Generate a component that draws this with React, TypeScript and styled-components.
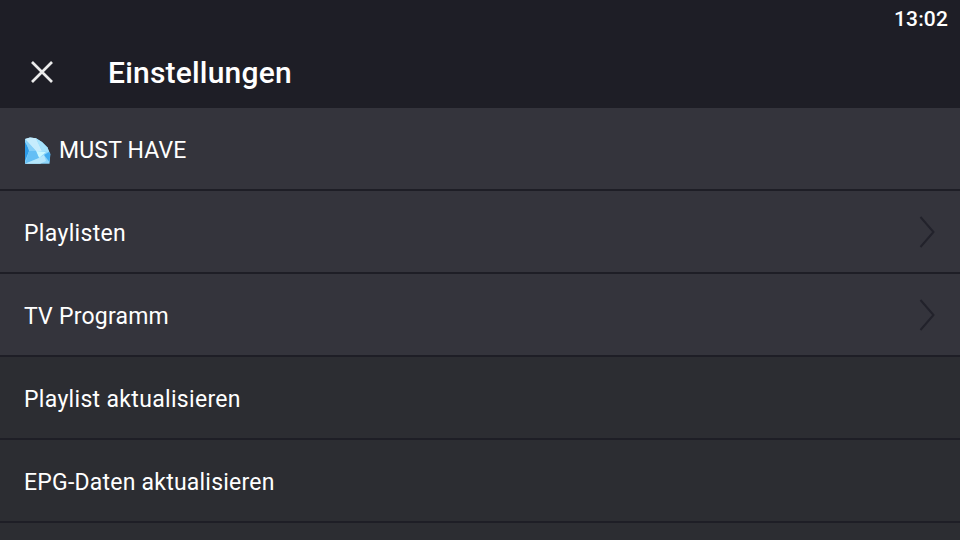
import React from "react";
import styled, { createGlobalStyle } from "styled-components";

const GlobalStyle = createGlobalStyle`
  * { box-sizing: border-box; }
  body { margin: 0; background: #2c2d32; overflow: hidden; }
`;
const Screen = styled.div`
  width: 960px; height: 540px; overflow: hidden;
  display: flex; flex-direction: column;
  background: #2c2d32; color: #fff;
  font-family: Roboto, sans-serif;
`;
const StatusBar = styled.div`
  height: 36px; flex: none; display: flex; align-items: center; justify-content: flex-end;
  padding: 2px 12px 0 0; background: #1e1e26;
  font-size: 21px; font-weight: 500; letter-spacing: 0.15px;
`;
const Header = styled.header`
  height: 72px; flex: none; display: flex; align-items: center;
  padding-left: 30px; background: #1e1e26;
`;
const CloseButton = styled.button`
  width: 24px; height: 24px; padding: 0; border: 0; background: none; color: #ebebeb;
  svg { display: block; }
`;
const Title = styled.h1`
  margin: 2px 0 0 54px; font-size: 30px; font-weight: 500; line-height: 36px; letter-spacing: 0.2px;
`;
const Row = styled.div<{ $raised?: boolean }>`
  height: 83px; flex: none; display: flex; align-items: center;
  padding: 0 25px 0 24px; border-bottom: 2px solid #1e1e26;
  background: ${(p) => (p.$raised ? "#34343c" : "#2c2d32")};
`;
const Label = styled.span<{ $tracking: number }>`
  font-size: 23px; line-height: 30px; flex: 1; white-space: nowrap; padding-top: 4px;
  letter-spacing: ${(p) => p.$tracking}px;
`;
const GemIcon = styled.svg`
  width: 27px; height: 27px; margin: 3px 8px 0 0;
`;
const Chevron = styled.svg`
  width: 16px; height: 32px; fill: none; stroke: #22222b; stroke-width: 2;
`;

const Gem = () => (
  <GemIcon viewBox="0 0 27 27">
    <path fill="#8dd5fa" d="M1 2L6 .4L12 1.2L18 5L23.5 10.5L26.3 17L25.5 26.7H1Z" />
    <path fill="#c6ecfd" d="M1 2L6 .4L12 1.2L18 14L12 14Z" />
    <path fill="#2d9be8" d="M1 5L5.5 13L1 24Z" />
    <path fill="#86cff8" d="M1 2L12 14L5 14Z" />
    <path fill="#a5e3fd" d="M12 1.2L18 5L23.5 10.5L25 15L18 14Z" />
    <path fill="#c9f7ff" d="M12 14L22 15L15 21Z" />
    <path fill="#42acef" d="M25 15L26.3 17L25.5 25L20 18Z" />
    <path fill="#64bff5" d="M1 26.7L5 14L12 14L15 21Z" />
    <path fill="#b5e6fc" d="M1 26.7L15 21L20 18L22 24L16 26.7Z" />
  </GemIcon>
);

const rows = [
  { label: "MUST HAVE", tracking: 0.16, raised: true, gem: true },
  { label: "Playlisten", tracking: 0.33, raised: true, arrow: true },
  { label: "TV Programm", tracking: 0.22, raised: true, arrow: true },
  { label: "Playlist aktualisieren", tracking: 0.32 },
  { label: "EPG-Daten aktualisieren", tracking: 0.22 },
];

export default function App() {
  return (
    <Screen>
      <GlobalStyle />
      <StatusBar>13:02</StatusBar>
      <Header>
        <CloseButton aria-label="Schließen">
          <svg width="24" height="24" viewBox="0 0 24 24" stroke="currentColor" strokeWidth="2.7"><path d="M2 2L22 22M22 2L2 22" /></svg>
        </CloseButton>
        <Title>Einstellungen</Title>
      </Header>
      {rows.map((r) => (
        <Row key={r.label} $raised={r.raised}>
          {r.gem && <Gem />}
          <Label $tracking={r.tracking}>{r.label}</Label>
          {r.arrow && <Chevron viewBox="0 0 16 32"><path d="M1.5 1L14.5 16L1.5 31" /></Chevron>}
        </Row>
      ))}
    </Screen>
  );
}
